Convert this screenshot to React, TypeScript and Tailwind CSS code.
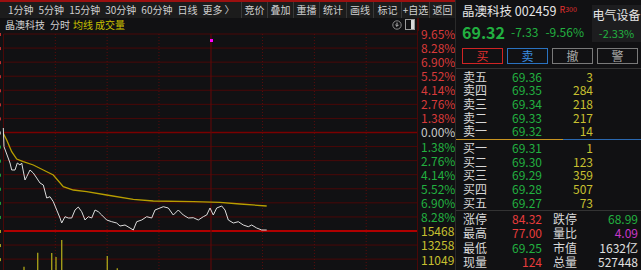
import React from "react";

const FONT = { fontFamily: '"Noto Sans CJK SC", "Noto Sans", sans-serif' };

const tabs = ["1分钟", "5分钟", "15分钟", "30分钟", "60分钟", "日线", "更多"];
const btns: [string, string][] = [
  ["竞价", "w-[26px]"],
  ["叠加", "w-[26px]"],
  ["重播", "w-[26px]"],
  ["统计", "w-[27px]"],
  ["画线", "w-[27px]"],
  ["标记", "w-[28px]"],
  ["+自选", "w-[28px]"],
  ["返回", "w-[26px]"],
];

const axis: [string, string][] = [
  ["9.65%", "text-[#d83a3a]"],
  ["8.28%", "text-[#d83a3a]"],
  ["6.90%", "text-[#d83a3a]"],
  ["5.52%", "text-[#d83a3a]"],
  ["4.14%", "text-[#d83a3a]"],
  ["2.76%", "text-[#d83a3a]"],
  ["1.38%", "text-[#d83a3a]"],
  ["0.00%", "text-[#c8c8c8]"],
  ["1.38%", "text-[#22b040]"],
  ["2.76%", "text-[#22b040]"],
  ["4.14%", "text-[#22b040]"],
  ["5.52%", "text-[#22b040]"],
  ["6.90%", "text-[#22b040]"],
  ["8.28%", "text-[#22b040]"],
  ["15468", "text-[#c8c030]"],
  ["13258", "text-[#c8c030]"],
  ["11049", "text-[#c8c030] pt-[1px]"],
];

const sells = [
  ["卖五", "69.36", "3"],
  ["卖四", "69.35", "284"],
  ["卖三", "69.34", "218"],
  ["卖二", "69.33", "217"],
  ["卖一", "69.32", "14"],
];
const buys = [
  ["买一", "69.31", "1"],
  ["买二", "69.30", "123"],
  ["买三", "69.29", "359"],
  ["买四", "69.28", "507"],
  ["买五", "69.27", "73"],
];

const stats: [string, string, string, string, string, string][] = [
  ["涨停", "84.32", "text-[#e83c3c]", "跌停", "68.99", "text-[#22b040]"],
  ["最高", "77.00", "text-[#e83c3c]", "量比", "4.09", "text-[#c837c8]"],
  ["最低", "69.25", "text-[#22b040]", "市值", "1632亿", "text-[#e0e0e0]"],
  ["现量", "124", "text-[#e83c3c]", "总量", "527448", "text-[#e0e0e0]"],
];

const white =
  "3.3,128 4,146.7 10,163 11.7,170 15,170 17.3,163 20,165 21.7,163 25,180 26.7,176.7 30,170 33.3,173 36.7,178 40,183 43.3,185 46.7,198 50,196.7 53.3,201.7 56.7,210 60,218 61.7,223 65,216.7 68.3,218 71.7,218 75,210 78.3,207 81.7,211.7 85,220 88.3,216.7 91.7,218 95,210 98.3,211.7 101.7,215 106.7,220 111.7,221.7 116.7,223 120,226 125,225 130,228 133.3,230 136.7,221.7 141.7,220 146.7,216.7 151.7,218 155,210 160,208 163.3,206.7 168.3,208 173.3,215 178.3,210 183.3,215 188.3,218 193.3,217.7 198.3,220 203.3,216.7 206.7,215 210,208 213.3,215 216.7,208 221.7,206 225,210 228.3,220 233.3,223 238.3,221.7 243.3,225 248.3,226.7 251.7,225 256.7,228 261.7,230 266.7,230";
const avg =
  "3.3,133.3 6.7,140 11.7,151.7 16.7,159 23.3,161.7 33.3,165 43.3,170 53.3,175 63.3,186.7 73.3,190 86.7,191.7 106.7,195 133.3,199.3 153.3,201 193.3,201.7 220,202.3 240,204 266.7,206";

const vols: [number, number][] = [
  [24, 266.7],
  [37.7, 252.7],
  [51.7, 253],
  [56, 257],
  [61.7, 240],
  [107.3, 256],
  [117.3, 268.3],
];

function Chart() {
  const ys = Array.from({ length: 17 }, (_, k) => 34 + 14.07 * k);
  const tickColor = (k: number) =>
    k < 7 ? "#c03030" : k === 7 ? "#a0a0a0" : k < 14 ? "#1f9a38" : "#a8a020";
  const dotted = [1, 2, 3, 5, 6, 7].map((i) => 3.5 + (414.5 * i) / 8);
  return (
    <svg width="418" height="239" className="block shrink-0 overflow-visible">
      <g transform="translate(0,-31)">
        {ys.map((y, k) => (
          <line
            key={k}
            x1={3.5}
            x2={418}
            y1={y}
            y2={y}
            stroke={k === 14 ? "#b00000" : k === 7 ? "#7a0000" : "#4a0808"}
            strokeWidth={k === 14 ? 2 : k === 7 ? 1.6 : 1}
          />
        ))}
        {ys.map((y, k) => (
          <rect key={"t" + k} x={0} y={y - 1} width={1} height={3} fill={tickColor(k)} />
        ))}
        {dotted.map((x, i) => (
          <line key={"d" + i} x1={x} x2={x} y1={34} y2={270} stroke="#5a0c0c" strokeWidth={1} strokeDasharray="1 2" />
        ))}
        <line x1={211} x2={211} y1={34} y2={270} stroke="#5a0a0a" strokeWidth={1.2} />
        <line x1={3.5} x2={3.5} y1={34} y2={270} stroke="#4a0808" strokeWidth={1} />
        <line x1={417.5} x2={417.5} y1={18} y2={270} stroke="#4a0808" strokeWidth={1} />
        <rect x={210} y={39} width={3} height={3} fill="#ff00ff" />
        {vols.map(([x, y], i) => (
          <line key={"v" + i} x1={x} x2={x} y1={y} y2={270} stroke="#a09a18" strokeWidth={1.4} />
        ))}
        <polyline points={avg} fill="none" stroke="#b89e00" strokeWidth={1.3} />
        <polyline points={white} fill="none" stroke="#dcdcdc" strokeWidth={1} />
      </g>
    </svg>
  );
}

function Row({ r }: { r: string[] }) {
  return (
    <div className="flex h-[13.6px] items-center text-[12px] leading-none">
      <span className="w-[52px] pl-[7px] text-[#d8d8d8]">{r[0]}</span>
      <span className="w-[34px] text-right text-[#22b040]">{r[1]}</span>
      <span className="w-[51px] text-right text-[#c8c030]">{r[2]}</span>
    </div>
  );
}

export default function App() {
  return (
    <div className="flex h-[270px] w-[641px] overflow-hidden bg-[#111113]" style={FONT}>
      {/* left */}
      <div className="flex w-[455px] shrink-0 flex-col">
        <div className="flex h-[18px] shrink-0 items-stretch border-t-2 border-[#9a1010] bg-[#1c1c1c] text-[10px] leading-none text-[#d0d0d0]">
          <div className="flex flex-1 items-center gap-[5px] pl-[8px]">
            {tabs.map((t) => (
              <span key={t}>{t}</span>
            ))}
            <span className="-ml-[3px]">〉</span>
          </div>
          <div className="flex items-stretch">
            {btns.map(([t, w]) => (
              <span key={t} className={`${w} flex items-center justify-center border-l border-[#383838]`}>
                {t}
              </span>
            ))}
          </div>
        </div>
        <div className="flex h-[13px] shrink-0 items-center text-[10px] leading-none">
          <span className="pl-[5px] text-[#d0d0d0]">晶澳科技</span>
          <span className="ml-[5px] text-[#d0d0d0]">分时</span>
          <span className="ml-[3px] text-[#c8c000]">均线</span>
          <span className="ml-[2px] text-[#c8c000]">成交量</span>
          <div className="ml-auto flex items-center gap-[3px] pr-[3px]">
            <svg width="10" height="10" viewBox="0 0 10 10">
              <circle cx="5" cy="5" r="4.2" fill="none" stroke="#8a8a8a" strokeWidth="1" />
              <path d="M5 2.6v3.6M3.4 4.8 5 6.4l1.6-1.6" fill="none" stroke="#bdbdbd" strokeWidth="1" />
            </svg>
            <svg width="10" height="11" viewBox="0 0 10 11">
              <rect x="0.5" y="0.5" width="9" height="10" fill="none" stroke="#9a9a9a" strokeWidth="1" />
              <rect x="6" y="1" width="3" height="9" fill="#d8d8d8" />
            </svg>
          </div>
          <div className="h-full w-[37px] border-l border-[#4a0808]" />
        </div>
        <div className="flex min-h-0 flex-1">
          <Chart />
          <div className="-mt-[4px] flex w-[37px] flex-col pl-[3px]">
            {axis.map(([t, c], i) => (
              <div key={i} className={`flex h-[14.07px] shrink-0 items-center text-[12px] leading-none ${c}`}>
                {t}
              </div>
            ))}
          </div>
        </div>
      </div>
      <div className="w-px shrink-0 bg-[#2a2a2a]" />
      {/* right panel */}
      <div className="flex min-w-0 flex-1 flex-col">
        <div className="flex h-[44px] shrink-0">
          <div className="flex flex-1 flex-col pl-[6px]">
            <div className="flex h-[16px] items-center pt-[6px] text-[12.5px] leading-none text-[#e6e6e6]">
              <span>晶澳科技 002459</span>
              <span className="ml-[3px] -mt-[3px] text-[9px] text-[#e03030]">R</span>
              <span className="-mt-[3px] text-[7px] text-[#e03030]">300</span>
            </div>
            <div className="mt-[8px] flex items-center leading-none text-[#22b040]">
              <span className="text-[16px] font-bold">69.32</span>
              <span className="ml-[6px] text-[12px]">-7.33</span>
              <span className="ml-[7px] text-[12px]">-9.56%</span>
            </div>
          </div>
          <div className="mt-[5px] flex h-[37px] w-[49px] flex-col items-center bg-[#1d1d1f] leading-none">
            <span className="mt-[4px] text-[12px] text-[#e6e6e6]">电气设备</span>
            <span className="mt-[7px] text-[11px] text-[#22b040]">-2.33%</span>
          </div>
        </div>
        <div className="mt-[4px] grid h-[16px] shrink-0 grid-cols-4 gap-[4px] pl-[6px] pr-[3px] text-[12px] leading-none">
          <div className="flex items-center justify-center border border-[#d02424] text-[#e03030]">买</div>
          <div className="flex items-center justify-center border border-[#2a72c0] text-[#3a8ee0]">卖</div>
          <div className="flex items-center justify-center border border-[#7a7a7a] text-[#aaaaaa]">撤</div>
          <div className="flex items-center justify-center border border-[#7a7a7a] text-[#aaaaaa]">警</div>
        </div>
        <div className="mt-[4px] h-px shrink-0 bg-[#333]" />
        <div className="flex flex-col pt-[1px]">
          {sells.map((r) => (
            <Row key={r[0]} r={r} />
          ))}
        </div>
        <div className="mt-[1px] flex h-[1.5px] shrink-0">
          <div className="w-[107px] bg-[#c89420]" />
          <div className="flex-1 bg-[#2a68b0]" />
        </div>
        <div className="flex flex-col pt-[1px]">
          {buys.map((r) => (
            <Row key={r[0]} r={r} />
          ))}
        </div>
        <div className="mt-[1px] h-px shrink-0 bg-[#333]" />
        <div className="flex flex-col">
          {stats.map(([l1, v1, c1, l2, v2, c2]) => (
            <div key={l1} className="flex h-[14.5px] items-center text-[12px] leading-none">
              <span className="w-[52px] pl-[7px] text-[#d8d8d8]">{l1}</span>
              <span className={`w-[34px] text-right ${c1}`}>{v1}</span>
              <span className="ml-[11px] text-[#d8d8d8]">{l2}</span>
              <span className={`flex-1 pr-[3px] text-right ${c2}`}>{v2}</span>
            </div>
          ))}
        </div>
      </div>
    </div>
  );
}
